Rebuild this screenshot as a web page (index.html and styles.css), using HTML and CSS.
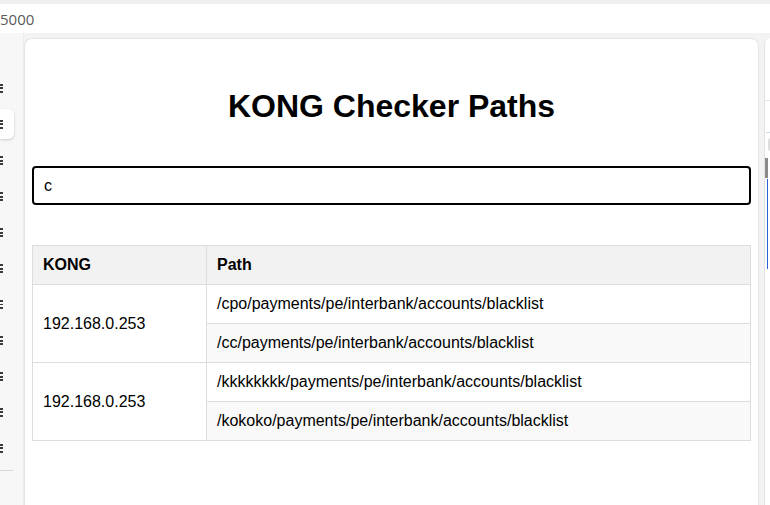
FILE: index.html
```html
<!DOCTYPE html>
<html>
<head>
<meta charset="utf-8">
<link rel="stylesheet" href="styles.css">
</head>
<body>
<div class="topstrip"></div>
<div class="addressbar"><span class="url">5000</span></div>
<div class="workspace">
  <aside class="sidebar">
    <div class="icons">
      <div class="ic"><span class="dots"></span></div>
      <div class="ic active"><span class="dots"></span></div>
      <div class="ic"><span class="dots"></span></div>
      <div class="ic"><span class="dots"></span></div>
      <div class="ic"><span class="dots"></span></div>
      <div class="ic"><span class="dots"></span></div>
      <div class="ic"><span class="dots"></span></div>
      <div class="ic"><span class="dots"></span></div>
      <div class="ic"><span class="dots"></span></div>
      <div class="ic"><span class="dots"></span></div>
      <div class="ic"><span class="dots"></span></div>
    </div>
    <div class="sep"></div>
  </aside>
  <main class="card">
    <h1 class="title">KONG Checker Paths</h1>
    <input class="search" type="text" value="c" autofocus>
    <table class="paths">
      <colgroup><col class="c1"><col></colgroup>
      <thead>
        <tr><th>KONG</th><th>Path</th></tr>
      </thead>
      <tbody>
        <tr><td rowspan="2">192.168.0.253</td><td>/cpo/payments/pe/interbank/accounts/blacklist</td></tr>
        <tr><td>/cc/payments/pe/interbank/accounts/blacklist</td></tr>
        <tr><td rowspan="2">192.168.0.253</td><td>/kkkkkkkk/payments/pe/interbank/accounts/blacklist</td></tr>
        <tr><td>/kokoko/payments/pe/interbank/accounts/blacklist</td></tr>
      </tbody>
    </table>
  </main>
  <aside class="rpanel">
    <div class="rline"></div>
    <div class="rblue"></div>
    <div class="rblock"></div>
    <div class="rthumb"></div>
    <div class="rvline"></div>
  </aside>
</div>
</body>
</html>
```
FILE: styles.css
```css
* { box-sizing: border-box; }
html, body { margin: 0; padding: 0; }
body {
  width: 770px;
  height: 505px;
  overflow: hidden;
  background: #f3f3f3;
  font-family: "Liberation Sans", Arial, sans-serif;
}
.topstrip { height: 4px; background: #efefef; }
.addressbar {
  height: 29px;
  background: #ffffff;
  display: flex;
  align-items: center;
}
.url {
  font-family: "Open Sans", "Liberation Sans", sans-serif;
  font-size: 15px;
  color: #5a5a5a;
  margin-left: 0;
  padding-top: 1px;
}
.workspace {
  display: flex;
  height: 472px;
  padding-top: 5px;
  background: #f3f3f3;
}
.sidebar {
  width: 24px;
  flex: none;
  background: #f7f7f7;
  border-right: 1px solid #ebebeb;
  margin-top: -5px;
  display: flex;
  flex-direction: column;
}
.icons {
  padding-top: 37px;
  display: flex;
  flex-direction: column;
}
.ic {
  height: 36px;
  width: 14px;
  display: flex;
  align-items: center;
}
.ic.active {
  background: #ffffff;
  border-radius: 0 6px 6px 0;
  box-shadow: 0 1px 3px rgba(0,0,0,0.18);
  height: 30px;
  margin: 3px 0;
}
.dots {
  width: 3px;
  height: 9px;
  background:
    linear-gradient(#3a3a3a 0 2px, transparent 2px 3.5px, #3a3a3a 3.5px 5.5px, transparent 5.5px 7px, #3a3a3a 7px 9px);
}
.sep {
  margin-top: 4px;
  width: 13px;
  height: 1px;
  background: #d9d9d9;
}
.card {
  width: 735px;
  flex: none;
  background: #ffffff;
  border: 1px solid #e4e4e4;
  border-bottom: none;
  border-radius: 8px 8px 0 0;
  padding: 49px 7px 0 7px;
  margin-left: 0;
}
.title {
  margin: 0;
  font-size: 32px;
  line-height: 37px;
  font-weight: bold;
  text-align: center;
  color: #000;
}
.search {
  display: block;
  width: 100%;
  height: 39px;
  margin-top: 41px;
  border: 2px solid #000;
  border-radius: 4px;
  padding: 0 10px;
  font-family: "Liberation Sans", Arial, sans-serif;
  font-size: 16px;
  color: #000;
  outline: none;
  background: #fff;
}
.paths {
  width: 100%;
  margin-top: 40px;
  border-collapse: collapse;
  table-layout: fixed;
  font-size: 16px;
  color: #000;
}
.paths col.c1 { width: 174px; }
.paths th, .paths td {
  border: 1px solid #dddddd;
  padding: 10px 10px;
  line-height: 18px;
  text-align: left;
  vertical-align: middle;
}
.paths th {
  background: #f2f2f2;
  font-weight: bold;
}
.paths tbody tr:nth-child(even) { background: #f9f9f9; }
.rpanel {
  flex: none;
  width: 7px;
  margin-left: 5px;
  background: #ffffff;
  border-left: 1px solid #e2e2e2;
  border-radius: 6px 0 0 0;
  position: relative;
}
.rline { position: absolute; left: 0; right: 0; top: 62px; height: 1px; background: #e6e6e6; }
.rblue { position: absolute; left: 1px; right: 0; top: 94px; height: 1px; background: #c8d8f5; }
.rblock { position: absolute; left: 3px; right: 0; top: 100px; height: 13px; background: #dcdcdc; border-radius: 3px 0 0 3px; }
.rthumb { position: absolute; left: 0; width: 3px; top: 120px; height: 20px; background: #8a8a8a; }
.rvline { position: absolute; left: 2px; width: 1px; top: 141px; height: 90px; background: #2a62d6; }
```
